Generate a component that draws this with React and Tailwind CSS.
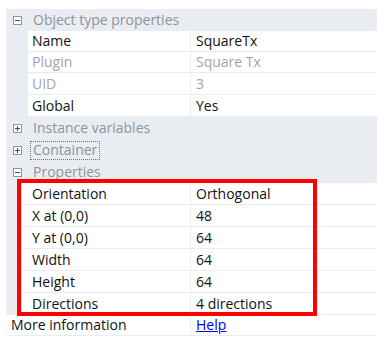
const font = { fontFamily: '"Open Sans", "Noto Sans CJK TC", sans-serif' }

function Toggle({ open }) {
  return (
    <span className="flex h-[9px] w-[9px] items-center justify-center border border-[#8c96a8] bg-white">
      <svg width="7" height="7" viewBox="0 0 7 7">
        <path d="M1 3.5h5" stroke="#3c4a66" strokeWidth="1" />
        {!open && <path d="M3.5 1v5" stroke="#3c4a66" strokeWidth="1" />}
      </svg>
    </span>
  )
}

function Section({ title, open, focused }) {
  return (
    <div className="flex h-[22px] items-center">
      <div className="flex w-[22px] justify-center pl-[1px]">
        <Toggle open={open} />
      </div>
      <span
        className={
          'ml-[2px] flex h-[19px] items-center px-[2px] text-[#8e949c] ' +
          (focused ? 'border border-dotted border-[#777]' : 'border border-transparent')
        }
      >
        {title}
      </span>
    </div>
  )
}

function Row({ label, value, dim, tall = true }) {
  const color = dim ? 'text-[#a0a4aa]' : 'text-[#111]'
  return (
    <div className={'ml-[22px] flex border-b border-[#e9ecf0] bg-white ' + (tall ? 'h-[22px]' : 'h-[21px]')}>
      <div className={'flex w-[163px] shrink-0 items-center border-r border-[#e9ecf0] pl-[4px] ' + color}>
        {label}
      </div>
      <div className={'flex flex-1 items-center pl-[5px] ' + color}>{value}</div>
    </div>
  )
}

export default function App() {
  const props = [
    ['Orientation', 'Orthogonal'],
    ['X at (0,0)', '48'],
    ['Y at (0,0)', '64'],
    ['Width', '64'],
    ['Height', '64'],
    ['Directions', '4 directions'],
  ]
  return (
    <div className="h-[344px] w-[387px] bg-white pt-[9px] pl-[6px] text-[14px] leading-none" style={font}>
      <div className="w-[371px] bg-[#e9ecf0]">
        <Section title="Object type properties" open />
        <Row label="Name" value="SquareTx" tall={false} />
        <Row label="Plugin" value="Square Tx" dim tall={false} />
        <Row label="UID" value="3" dim />
        <Row label="Global" value="Yes" />
        <Section title="Instance variables" />
        <Section title="Container" focused />
        <Section title="Properties" open />
        <div className="relative">
          {props.map(([l, v]) => (
            <div key={l} className="ml-[16px] flex h-[22px] border-b border-[#e9ecf0] bg-white">
              <div className="flex w-[169px] shrink-0 items-center border-r border-[#e9ecf0] pl-[10px] text-[#111]">
                {l}
              </div>
              <div className="flex flex-1 items-center pl-[5px] text-[#111]">{v}</div>
            </div>
          ))}
          <div className="pointer-events-none absolute top-[-4px] left-[11px] h-[137px] w-[300px] border-[4px] border-[#ff0000]" />
        </div>
        <div className="flex h-[21px] border-b border-[#e9ecf0] bg-white">
          <div className="flex w-[185px] shrink-0 items-center border-r border-[#e9ecf0] pl-[5px] text-[#111]">
            More information
          </div>
          <div className="flex flex-1 items-center pl-[5px]">
            <a href="#help" className="text-[#0000ee] underline">Help</a>
          </div>
        </div>
      </div>
    </div>
  )
}
